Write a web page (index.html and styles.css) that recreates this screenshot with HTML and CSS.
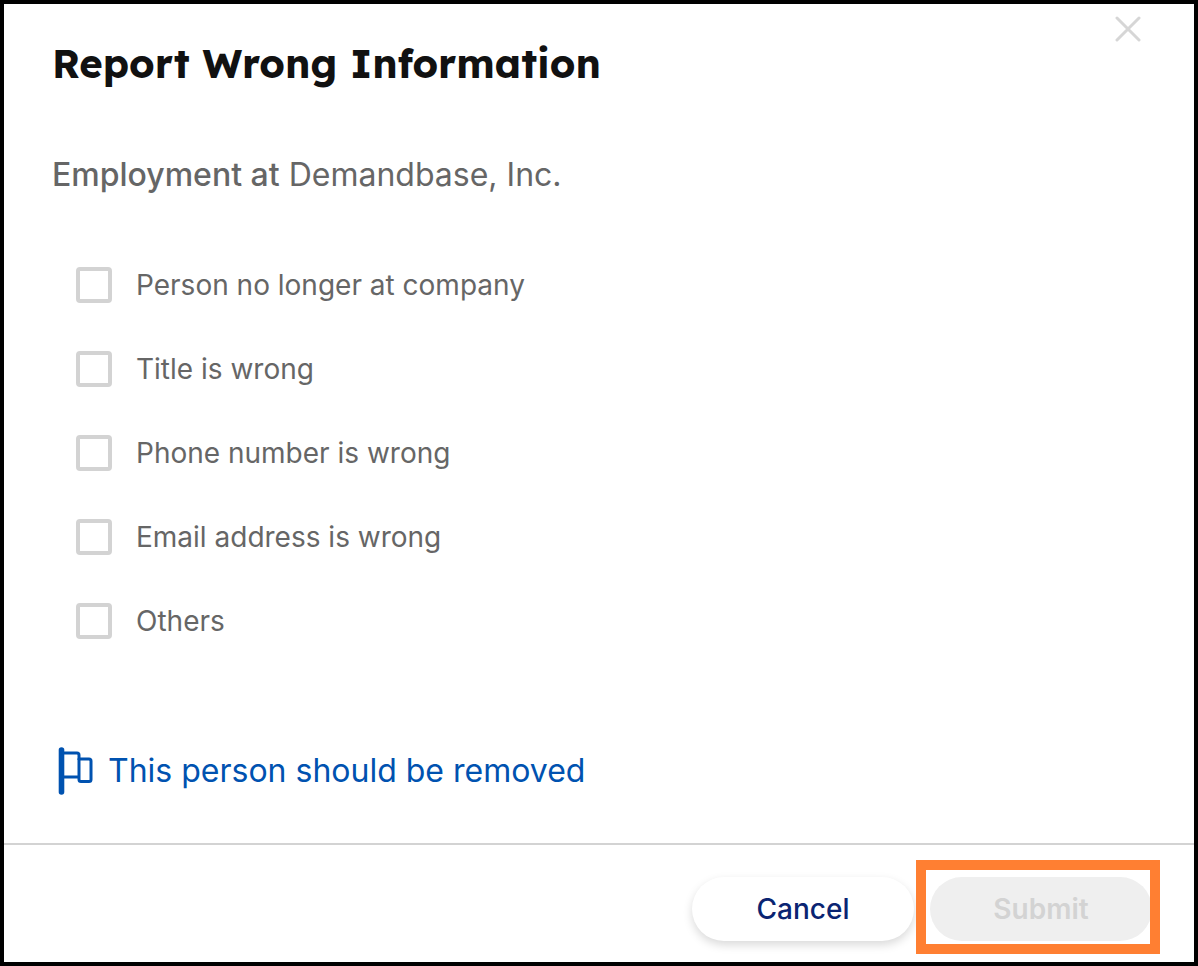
FILE: index.html
```html
<!DOCTYPE html>
<html lang="en">
<head>
  <meta charset="UTF-8" />
  <meta name="viewport" content="width=device-width,initial-scale=1.0"/>
  <title>Report Wrong Information</title>
  <link rel="stylesheet" href="styles.css">
</head>
<body>
  <form class="modal">
    <header class="modal-header">
      <h1>Report Wrong Information</h1>
      <button type="button" class="close" aria-label="Close">
        <svg width="26" height="26" viewBox="0 0 26 26" fill="none" stroke="#d6d6d6" stroke-width="3" stroke-linecap="round">
          <path d="M2 2l22 22M24 2L2 24"/>
        </svg>
      </button>
    </header>

    <main class="modal-body">
      <h2><strong>Employment at</strong> Demandbase, Inc.</h2>
      <div class="options">
        <label class="option" for="left"><input type="checkbox" id="left"/>Person no longer at company</label>
        <label class="option" for="title"><input type="checkbox" id="title"/>Title is wrong</label>
        <label class="option" for="phone"><input type="checkbox" id="phone"/>Phone number is wrong</label>
        <label class="option" for="email"><input type="checkbox" id="email"/>Email address is wrong</label>
        <label class="option" for="others"><input type="checkbox" id="others"/>Others</label>
      </div>
      <a href="#" class="remove">
        <svg width="36" height="48" viewBox="0 0 36 48" fill="none" stroke="#0052b0" stroke-linejoin="round">
          <path d="M3.500 3v42" stroke-width="5.6" stroke-linecap="round"/>
          <path d="M4 6h15a2 2 0 0 1 2 2v5M4 30h17" stroke-width="3"/>
          <path d="M21 12v20.500a2 2 0 0 0 2 2h8a2 2 0 0 0 2-2V14a2 2 0 0 0-2-2z" stroke-width="3"/>
        </svg>
        This person should be removed
      </a>
    </main>

    <footer class="modal-footer">
      <button type="button" class="btn cancel">Cancel</button>
      <div class="highlight">
        <button type="submit" class="btn submit" disabled>Submit</button>
      </div>
    </footer>
  </form>
</body>
</html>
```

FILE: styles.css
```css
* {
  box-sizing: border-box;
}
body {
  margin: 0;
  font-family: Inter, "Liberation Sans", sans-serif;
  background: #fff;
  color: #666;
}
.modal {
  display: flex;
  flex-direction: column;
  min-height: 100vh;
  border: 4px solid #000;
}
.modal-header {
  display: flex;
  justify-content: space-between;
  align-items: flex-start;
  padding: 12px 53px 0 48px;
}
h1 {
  margin: 23px 0 0;
  font-family: Lexend, Inter, sans-serif;
  font-size: 40px;
  line-height: 48px;
  font-weight: 700;
  color: #111;
}
.close {
  padding: 0;
  border: 0;
  background: none;
  cursor: pointer;
}
.close svg {
  display: block;
}
.modal-body {
  flex: 1;
  padding: 68px 48px 48px;
}
h2 {
  margin: 0;
  font-size: 32px;
  line-height: 40px;
  font-weight: 400;
}
h2 strong {
  font-weight: 500;
}
.options {
  display: flex;
  flex-direction: column;
  gap: 48px;
  margin: 72px 24px 0;
}
.option {
  display: flex;
  align-items: center;
  gap: 24px;
  font-size: 28px;
  line-height: 36px;
}
.option input {
  appearance: none;
  width: 36px;
  height: 36px;
  margin: 0;
  border: 4px solid #d3d3d3;
  border-radius: 4px;
  background: #fff;
}
.option input:checked {
  background: #0052b0;
}
.remove {
  display: flex;
  align-items: center;
  gap: 14px;
  width: fit-content;
  margin: 108px 0 0 6px;
  font-size: 32px;
  line-height: 48px;
  color: #0052b0;
  text-decoration: none;
}
.modal-footer {
  display: flex;
  justify-content: flex-end;
  gap: 16px;
  padding: 32px 42px 21px;
  border-top: 2px solid #d3d3d3;
}
.btn {
  display: block;
  width: 222px;
  height: 64px;
  border: 0;
  border-radius: 32px;
  font-family: inherit;
  font-size: 28px;
  font-weight: 500;
}
.cancel {
  background: #fff;
  color: #0a2472;
  box-shadow: 0 4px 10px rgba(0,0,0,0.15);
}
.submit {
  background: #efefef;
  color: #d3d3d3;
  font-weight: 600;
}
/* orange callout around the submit button */
.highlight {
  position: relative;
}
.highlight::after {
  content: "";
  position: absolute;
  inset: -17px -8px -13px -14px;
  border: 10px solid #ff7f32;
  pointer-events: none;
}
```
